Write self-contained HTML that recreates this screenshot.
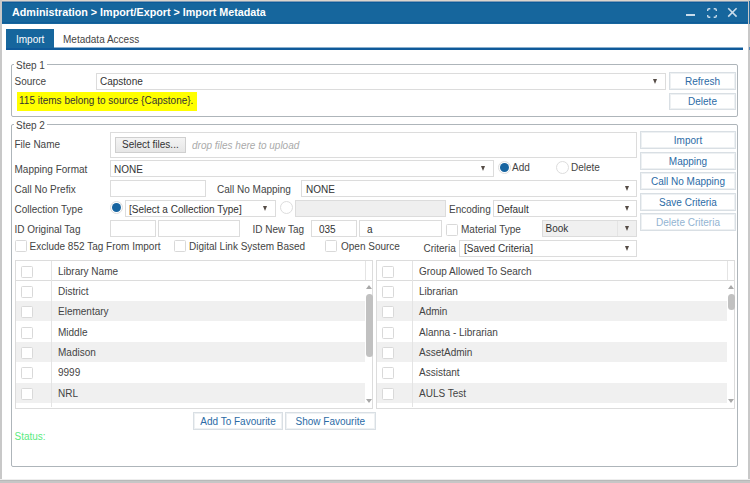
<!DOCTYPE html>
<html><head><meta charset="utf-8">
<style>
*{margin:0;padding:0;box-sizing:border-box}
html,body{width:750px;height:483px;overflow:hidden;background:#fff}
body{position:relative;font-family:"Liberation Sans",sans-serif;font-size:10px;color:#444}
.a{position:absolute}
.t{position:absolute;line-height:13px;white-space:nowrap}
.box{position:absolute;border:1px solid #dcdcdc;background:#fff}
.sel{position:absolute;border:1px solid #dcdcdc;background:#fff}
.arr{position:absolute;width:0;height:0;border-left:2.75px solid transparent;border-right:2.75px solid transparent;border-top:5px solid #564d47}
.btn{position:absolute;border:1px solid #d9dfe4;background:#fff;color:#2b6ba6;text-align:center;line-height:17px;box-shadow:inset 0 0 0 1px #eef1f3}
.cb{position:absolute;width:12px;height:12px;border:1px solid #d9d9d9;border-radius:1.5px;background:#fff}
.fs{position:absolute;border:1px solid #aeb5ba;border-radius:2px}
.leg{position:absolute;background:#fff;padding:0 2px;line-height:13px;color:#444}
.row{position:absolute;height:20px}
.g{background:#f0f0f0}
</style></head><body>
<!-- frame -->
<div class="a" style="left:0;top:0;width:750px;height:1px;background:#ddd5cd"></div>
<div class="a" style="left:0;top:0;width:2px;height:483px;background:#c8c8c8"></div>
<div class="a" style="left:748px;top:0;width:2px;height:483px;background:#c8c8c8"></div><div class="a" style="left:749px;top:1px;width:1px;height:23px;background:#1d6aa2"></div><div class="a" style="left:749px;top:47px;width:1px;height:3px;background:#5a8ab8"></div>
<div class="a" style="left:0;top:479px;width:750px;height:1px;background:#eeeeee"></div><div class="a" style="left:0;top:480px;width:750px;height:3px;background:#c6c6c6"></div><div class="a" style="left:0;top:480px;width:750px;height:1px;background:#b9b9b9"></div>
<!-- header -->
<div class="a" style="left:2px;top:1px;width:746px;height:23px;background:#16669d"></div><div class="a" style="left:2px;top:1px;width:746px;height:1px;background:#7e9bb5"></div><div class="a" style="left:2px;top:2px;width:746px;height:1px;background:#0c5a98"></div><div class="a" style="left:2px;top:22px;width:746px;height:1px;background:#0f5c99"></div>
<div class="t" style="left:12px;top:6px;font-size:10.75px;font-weight:bold;color:#fff">Administration &gt; Import/Export &gt; Import Metadata</div>
<div class="a" style="left:686px;top:14px;width:9px;height:2px;background:#c9dceb"></div>
<svg class="a" style="left:706px;top:7px" width="12" height="12" viewBox="0 0 12 12" fill="none" stroke="#c9dceb" stroke-width="1.4">
<path d="M1.7 4V3Q1.7 1.7 3 1.7H4.3M7.7 1.7H9Q10.3 1.7 10.3 3V4M10.3 8V9Q10.3 10.3 9 10.3H7.7M4.3 10.3H3Q1.7 10.3 1.7 9V8"/></svg>
<svg class="a" style="left:727px;top:7px" width="11" height="11" viewBox="0 0 11 11" stroke="#c9dceb" stroke-width="1.6">
<path d="M1.2 1.2L9.6 9.6M9.6 1.2L1.2 9.6"/></svg>
<!-- tabs -->
<div class="a" style="left:6px;top:29px;width:47.5px;height:20px;background:#16669d"></div>
<div class="t" style="left:16px;top:33px;color:#fff">Import</div>
<div class="t" style="left:63px;top:33px;color:#444">Metadata Access</div>
<div class="a" style="left:6px;top:47px;width:737px;height:1px;background:#1764a0;opacity:.5"></div><div class="a" style="left:6px;top:48px;width:737px;height:2px;background:#0f5a9a"></div>

<!-- step 1 -->
<div class="fs" style="left:11px;top:64px;width:727px;height:53px"></div>
<div class="leg" style="left:14px;top:59px">Step 1</div>
<div class="t" style="left:14.5px;top:75px">Source</div>
<div class="sel" style="left:96px;top:73px;width:570px;height:17px"></div>
<div class="t" style="left:100px;top:75px;color:#333">Capstone</div>
<div class="arr" style="left:653px;top:79px"></div>
<div class="a" style="left:17px;top:92px;width:180px;height:19px;background:#ffff00"></div>
<div class="t" style="left:19px;top:94px;color:#333">115 items belong to source {Capstone}.</div>
<div class="btn" style="left:669px;top:72px;width:67px;height:18px">Refresh</div>
<div class="btn" style="left:669px;top:93px;width:67px;height:17px;line-height:16px">Delete</div>

<!-- step 2 -->
<div class="fs" style="left:11px;top:124px;width:727px;height:343px"></div>
<div class="leg" style="left:14px;top:119px">Step 2</div>
<div class="t" style="left:14.5px;top:138px">File Name</div>
<div class="box" style="left:110px;top:132px;width:527px;height:26px"></div>
<div class="a" style="left:115px;top:137px;width:71px;height:16px;border:1px solid #cfcfcf;background:linear-gradient(#f4f4f4,#e6e6e6)"></div>
<div class="t" style="left:122px;top:138px;color:#333">Select files...</div>
<div class="t" style="left:192px;top:139px;font-style:italic;color:#aaa">drop files here to upload</div>

<div class="t" style="left:14.5px;top:163px">Mapping Format</div>
<div class="sel" style="left:110px;top:160px;width:384px;height:17px"></div>
<div class="t" style="left:114px;top:163px;color:#333">NONE</div>
<div class="arr" style="left:481px;top:166px"></div>
<div class="a" style="left:498px;top:161px;width:13px;height:13px;border-radius:50%;border:1px solid #ddd;background:#fff"></div>
<div class="a" style="left:500px;top:163px;width:9px;height:9px;border-radius:50%;background:#1764a0"></div>
<div class="t" style="left:512px;top:161px">Add</div>
<div class="a" style="left:556px;top:161px;width:13px;height:13px;border-radius:50%;border:1px solid #ddd;background:#fff"></div>
<div class="t" style="left:571px;top:161px">Delete</div>

<div class="t" style="left:14.5px;top:183px">Call No Prefix</div>
<div class="box" style="left:110px;top:180px;width:96px;height:17px"></div>
<div class="t" style="left:217px;top:183px">Call No Mapping</div>
<div class="sel" style="left:301px;top:180px;width:336px;height:17px"></div>
<div class="t" style="left:306px;top:183px;color:#333">NONE</div>
<div class="arr" style="left:624.5px;top:186px"></div>

<div class="t" style="left:14.5px;top:203px">Collection Type</div>
<div class="a" style="left:110px;top:201px;width:13px;height:13px;border-radius:50%;border:1px solid #ddd;background:#fff"></div>
<div class="a" style="left:112px;top:203px;width:9px;height:9px;border-radius:50%;background:#1764a0"></div>
<div class="sel" style="left:125px;top:200px;width:151px;height:17px"></div>
<div class="t" style="left:129px;top:203px;color:#333">[Select a Collection Type]</div>
<div class="arr" style="left:263px;top:206px"></div>
<div class="a" style="left:280px;top:201px;width:13px;height:13px;border-radius:50%;border:1px solid #ddd;background:#fff"></div>
<div class="box" style="left:295px;top:200px;width:151px;height:17px;background:#efefef"></div>
<div class="t" style="left:449px;top:203px">Encoding</div>
<div class="sel" style="left:493px;top:200px;width:144px;height:17px"></div>
<div class="t" style="left:497px;top:203px;color:#333">Default</div>
<div class="arr" style="left:624.5px;top:206px"></div>

<div class="t" style="left:14.5px;top:223px">ID Original Tag</div>
<div class="box" style="left:110px;top:220px;width:46px;height:17px"></div>
<div class="box" style="left:158px;top:220px;width:82px;height:17px"></div>
<div class="t" style="left:252.5px;top:223px">ID New Tag</div>
<div class="box" style="left:311px;top:220px;width:46px;height:17px"></div>
<div class="t" style="left:319px;top:223px;color:#333">035</div>
<div class="box" style="left:359px;top:220px;width:83px;height:17px"></div>
<div class="t" style="left:367px;top:223px;color:#333">a</div>
<div class="cb" style="left:445.5px;top:223.5px"></div>
<div class="t" style="left:461px;top:223px">Material Type</div>
<div class="sel" style="left:542px;top:220px;width:95px;height:17px;background:#f0f0f0"></div>
<div class="a" style="left:617px;top:221px;width:1px;height:15px;background:#e4e4e4"></div>
<div class="t" style="left:545.5px;top:222px;color:#333">Book</div>
<div class="arr" style="left:624.5px;top:226px"></div>

<div class="cb" style="left:14.5px;top:240px"></div>
<div class="t" style="left:29.5px;top:240px">Exclude 852 Tag From Import</div>
<div class="cb" style="left:174px;top:240px"></div>
<div class="t" style="left:189px;top:240px">Digital Link System Based</div>
<div class="cb" style="left:325px;top:240px"></div>
<div class="t" style="left:341px;top:240px">Open Source</div>
<div class="t" style="left:423.5px;top:242px">Criteria</div>
<div class="sel" style="left:459px;top:240px;width:178px;height:17px"></div>
<div class="t" style="left:464px;top:242px;color:#333">[Saved Criteria]</div>
<div class="arr" style="left:624.5px;top:246px"></div>

<div class="btn" style="left:640px;top:131px;width:96px;height:18px">Import</div>
<div class="btn" style="left:640px;top:152px;width:96px;height:18px">Mapping</div>
<div class="btn" style="left:640px;top:172px;width:96px;height:18px">Call No Mapping</div>
<div class="btn" style="left:640px;top:193px;width:96px;height:18px">Save Criteria</div>
<div class="btn" style="left:640px;top:213px;width:96px;height:18px;color:#93b4d2">Delete Criteria</div>
<div class="a" style="left:15px;top:260px;width:358px;height:149px;border:1px solid #dcdcdc"></div>
<div class="a" style="left:15px;top:280px;width:358px;height:1px;background:#dcdcdc"></div>
<div class="a" style="left:51px;top:261px;width:1px;height:146px;background:#e4e4e4"></div>
<div class="a" style="left:365px;top:261px;width:1px;height:19px;background:#e4e4e4"></div>
<div class="cb" style="left:21px;top:266px"></div>
<div class="t" style="left:58px;top:265px">Library Name</div>
<div class="cb" style="left:21px;top:286px"></div>
<div class="t" style="left:58px;top:285px">District</div>
<div class="a g" style="left:16px;top:301px;width:349px;height:20px"></div>
<div class="a" style="left:51px;top:301px;width:1px;height:20px;background:#e4e4e4"></div>
<div class="cb" style="left:21px;top:306px"></div>
<div class="t" style="left:58px;top:305px">Elementary</div>
<div class="cb" style="left:21px;top:327px"></div>
<div class="t" style="left:58px;top:326px">Middle</div>
<div class="a g" style="left:16px;top:342px;width:349px;height:20px"></div>
<div class="a" style="left:51px;top:342px;width:1px;height:20px;background:#e4e4e4"></div>
<div class="cb" style="left:21px;top:347px"></div>
<div class="t" style="left:58px;top:346px">Madison</div>
<div class="cb" style="left:21px;top:367px"></div>
<div class="t" style="left:58px;top:366px">9999</div>
<div class="a g" style="left:16px;top:383px;width:349px;height:20px"></div>
<div class="a" style="left:51px;top:383px;width:1px;height:20px;background:#e4e4e4"></div>
<div class="cb" style="left:21px;top:388px"></div>
<div class="t" style="left:58px;top:387px">NRL</div>
<div class="a" style="left:366px;top:285px;width:0;height:0;border-left:3.5px solid transparent;border-right:3.5px solid transparent;border-bottom:4px solid #a8a8a8"></div>
<div class="a" style="left:366px;top:399px;width:0;height:0;border-left:3.5px solid transparent;border-right:3.5px solid transparent;border-top:4px solid #a8a8a8"></div>
<div class="a" style="left:366px;top:294px;width:7px;height:63px;border-radius:3.5px;background:#c1c1c1"></div>
<div class="a" style="left:376px;top:260px;width:359px;height:149px;border:1px solid #dcdcdc"></div>
<div class="a" style="left:376px;top:280px;width:359px;height:1px;background:#dcdcdc"></div>
<div class="a" style="left:412px;top:261px;width:1px;height:146px;background:#e4e4e4"></div>
<div class="a" style="left:727px;top:261px;width:1px;height:19px;background:#e4e4e4"></div>
<div class="cb" style="left:382px;top:266px"></div>
<div class="t" style="left:419px;top:265px">Group Allowed To Search</div>
<div class="cb" style="left:382px;top:286px"></div>
<div class="t" style="left:419px;top:285px">Librarian</div>
<div class="a g" style="left:377px;top:301px;width:350px;height:20px"></div>
<div class="a" style="left:412px;top:301px;width:1px;height:20px;background:#e4e4e4"></div>
<div class="cb" style="left:382px;top:306px"></div>
<div class="t" style="left:419px;top:305px">Admin</div>
<div class="cb" style="left:382px;top:327px"></div>
<div class="t" style="left:419px;top:326px">Alanna - Librarian</div>
<div class="a g" style="left:377px;top:342px;width:350px;height:20px"></div>
<div class="a" style="left:412px;top:342px;width:1px;height:20px;background:#e4e4e4"></div>
<div class="cb" style="left:382px;top:347px"></div>
<div class="t" style="left:419px;top:346px">AssetAdmin</div>
<div class="cb" style="left:382px;top:367px"></div>
<div class="t" style="left:419px;top:366px">Assistant</div>
<div class="a g" style="left:377px;top:383px;width:350px;height:20px"></div>
<div class="a" style="left:412px;top:383px;width:1px;height:20px;background:#e4e4e4"></div>
<div class="cb" style="left:382px;top:388px"></div>
<div class="t" style="left:419px;top:387px">AULS Test</div>
<div class="a" style="left:728px;top:285px;width:0;height:0;border-left:3.5px solid transparent;border-right:3.5px solid transparent;border-bottom:4px solid #a8a8a8"></div>
<div class="a" style="left:728px;top:399px;width:0;height:0;border-left:3.5px solid transparent;border-right:3.5px solid transparent;border-top:4px solid #a8a8a8"></div>
<div class="a" style="left:727.5px;top:294px;width:7px;height:16px;border-radius:3.5px;background:#c1c1c1"></div>
<div class="btn" style="left:193px;top:412px;width:90px;height:18px">Add To Favourite</div>
<div class="btn" style="left:285px;top:412px;width:90.5px;height:18px">Show Favourite</div>
<div class="t" style="left:14.5px;top:430px;color:#5aea80">Status:</div>

</body></html>
